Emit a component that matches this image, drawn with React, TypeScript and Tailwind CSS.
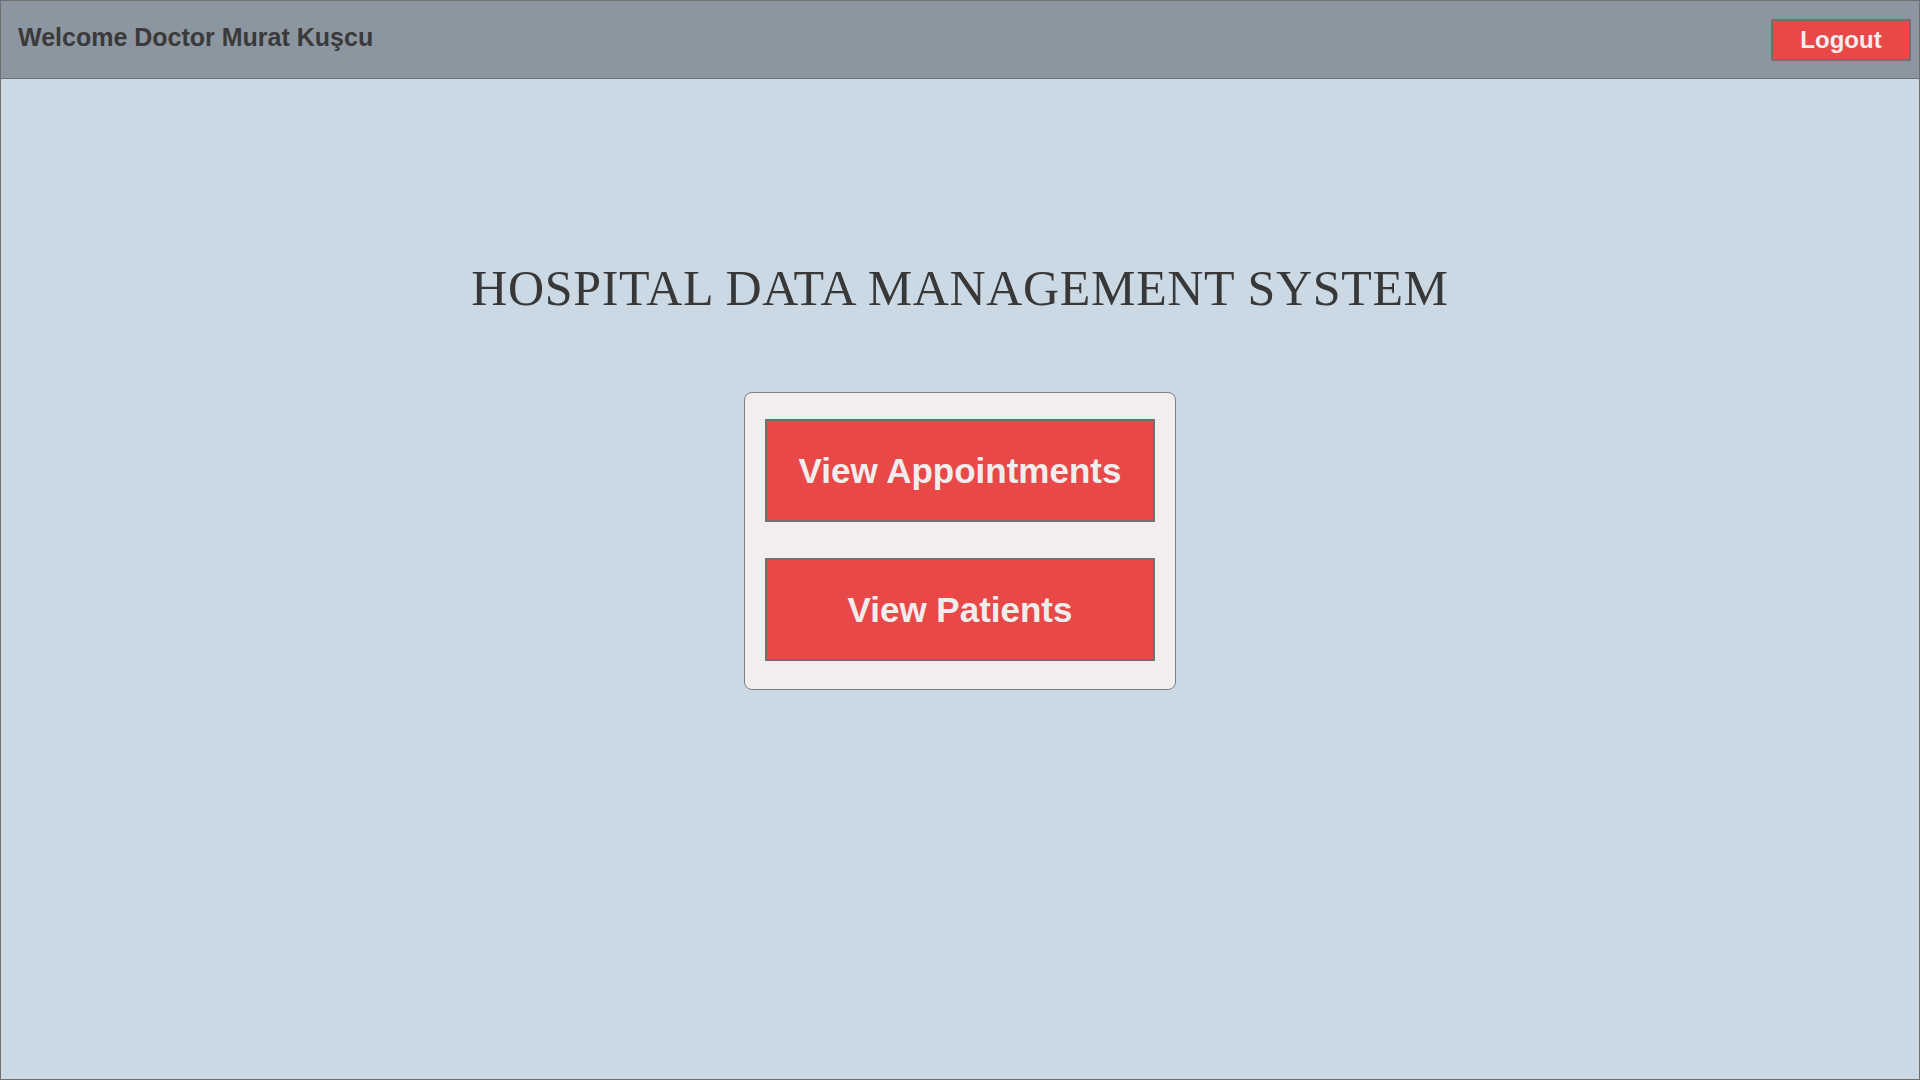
export default function App() {
  return (
    <div className="flex h-[1080px] w-[1920px] flex-col overflow-hidden border border-[#707070] bg-[#cbd9e5] font-['Liberation_Sans',Arial,sans-serif]">
      <header className="flex h-[78px] shrink-0 items-start justify-between border-b border-[#707070] bg-[#8c96a0]">
        <h1 className="ml-[17px] mt-[24px] text-[25px] font-bold leading-none text-[#3a3a3a]">
          Welcome Doctor Murat Kuşcu
        </h1>
        <button className="mr-[8px] mt-[18px] flex h-[42px] w-[140px] items-center justify-center border-2 border-[#707070] bg-[#e84848] text-[24px] font-bold leading-none text-[#f2eded]">
          Logout
        </button>
      </header>

      <main className="flex flex-col items-center">
        <h2 className="mt-[184px] font-['Liberation_Serif','Times_New_Roman',serif] text-[50px] leading-none tracking-[0.65px] text-[#383838]">
          HOSPITAL DATA MANAGEMENT SYSTEM
        </h2>

        <div className="mt-[79px] flex w-[432px] flex-col gap-[36px] rounded-[8px] border border-[#808080] bg-[#f1eeed] px-[20px] pb-[28px] pt-[26px]">
          <MenuButton label="View Appointments" />
          <MenuButton label="View Patients" />
        </div>
      </main>
    </div>
  );
}

function MenuButton({ label }: { label: string }) {
  return (
    <button className="flex h-[103px] w-full items-center justify-center border-2 border-[#707070] bg-[#e84848] text-[35px] font-bold leading-none text-[#f2eded]">
      {label}
    </button>
  );
}
